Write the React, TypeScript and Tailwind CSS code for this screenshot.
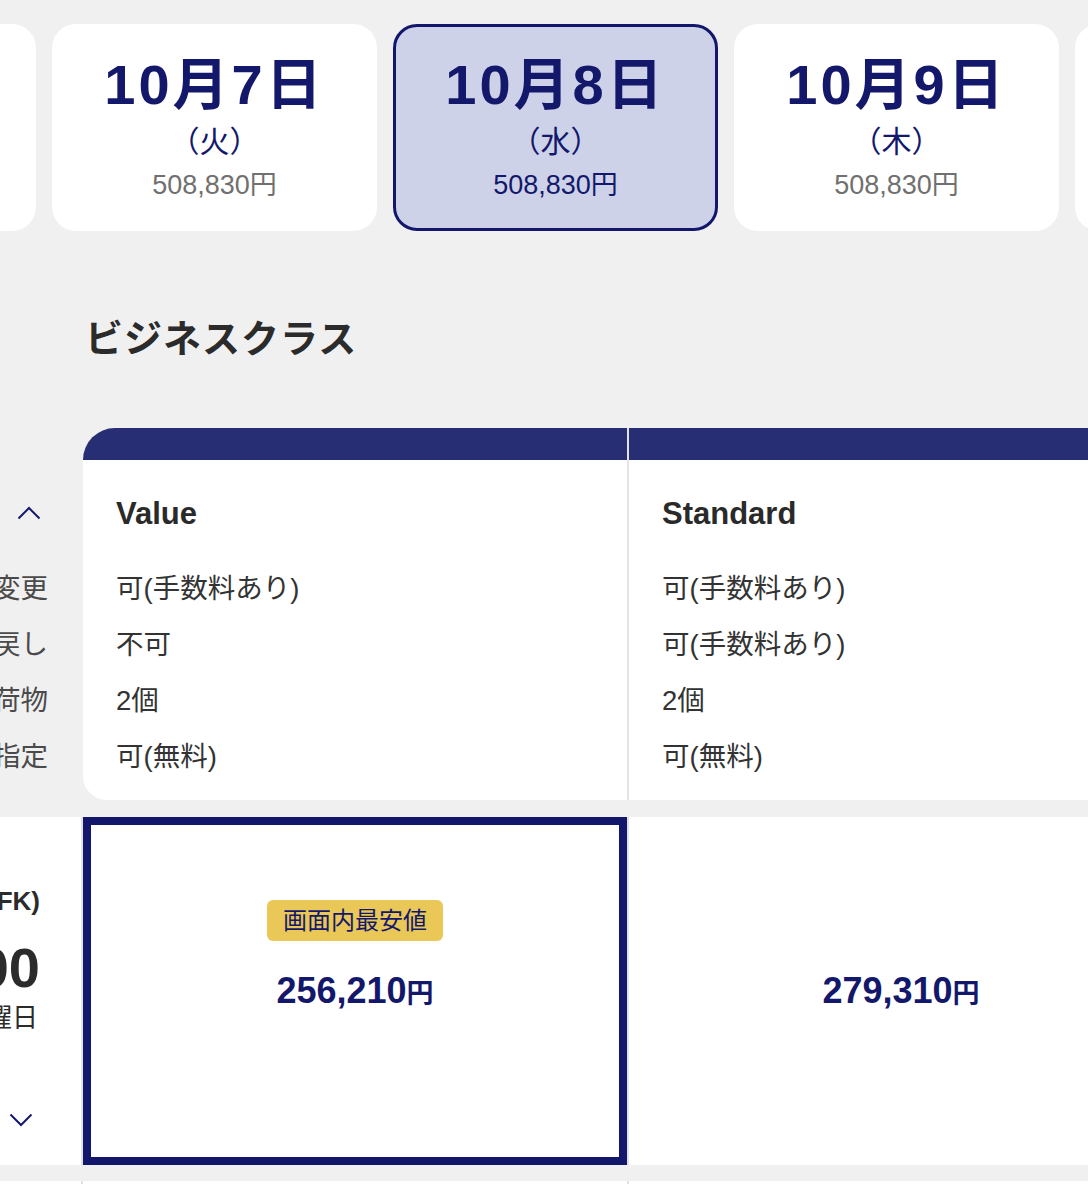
import React from 'react';

const FONT = { fontFamily: '"Liberation Sans", "Noto Sans CJK JP", sans-serif' };

interface DateItem {
    date: string;
    day: string;
    price: string;
    selected?: boolean;
}

const dates: DateItem[] = [
    { date: '10月6日', day: '（月）', price: '508,830円' },
    { date: '10月7日', day: '（火）', price: '508,830円' },
    { date: '10月8日', day: '（水）', price: '508,830円', selected: true },
    { date: '10月9日', day: '（木）', price: '508,830円' },
    { date: '10月10日', day: '（金）', price: '508,830円' },
];

const plans = [
    { name: 'Value', rows: ['可(手数料あり)', '不可', '2個', '可(無料)'] },
    { name: 'Standard', rows: ['可(手数料あり)', '可(手数料あり)', '2個', '可(無料)'] },
];

const labels = ['予約変更', '払い戻し', '受託手荷物', '座席指定'];

const Chevron = ({ up }: { up?: boolean }) => (
    <svg width="24" height="14" viewBox="0 0 24 14" fill="none">
        <path
            d={up ? 'M1.5 12.5 L12 2 L22.5 12.5' : 'M1.5 1.5 L12 12 L22.5 1.5'}
            stroke="#141a6b"
            strokeWidth="2"
        />
    </svg>
);

const DateCard = ({ item }: { item: DateItem }) => {
    return (
        <div
            className={
                item.selected
                    ? 'w-[325px] h-[207px] shrink-0 rounded-[24px] bg-[#cdd2e8] border-[3px] border-[#12176b] flex flex-col items-center pt-[30px]'
                    : 'w-[325px] h-[207px] shrink-0 rounded-[24px] bg-white border-[3px] border-transparent flex flex-col items-center pt-[30px]'
            }
        >
            <div className="text-[56px] leading-[56px] font-bold tracking-[3px] text-[#13186b]">
                {item.date}
            </div>
            <div className="mt-[11px] text-[30px] leading-[36px] text-[#13186b]">
                {item.day}
            </div>
            <div
                className={
                    item.selected
                        ? 'mt-[9px] text-[27px] leading-[32px] text-[#13186b]'
                        : 'mt-[9px] text-[27px] leading-[32px] text-[#707070]'
                }
            >
                {item.price}
            </div>
        </div>
    );
};

const PlanBody = ({ name, rows, rounded }: { name: string; rows: string[]; rounded?: boolean }) => (
    <div
        className={
            rounded
                ? 'w-[544px] shrink-0 bg-white rounded-bl-[24px] pl-[33px] pt-[34px] pb-[15px]'
                : 'w-[544px] shrink-0 bg-white pl-[33px] pt-[34px] pb-[15px]'
        }
    >
        <div className="text-[31px] leading-[40px] font-bold text-[#2a2a2a]">{name}</div>
        <div className="mt-[27px]">
            {rows.map((row, i) => (
                <div key={i} className="h-14 flex items-center text-[27.5px] text-[#333333]">
                    {row}
                </div>
            ))}
        </div>
    </div>
);

export default function App() {
    return (
        <div className="w-[1088px] h-[1184px] overflow-hidden bg-[#f0f0f0]" style={FONT}>
            <div className="flex gap-4 pt-6 ml-[-289px]">
                {dates.map((d) => (
                    <DateCard key={d.date} item={d} />
                ))}
            </div>

            <h2 className="ml-[85px] mt-[84px] text-[38px] leading-[48px] font-bold tracking-[1px] text-[#2b2b2b]">
                ビジネスクラス
            </h2>

            {/* plan table */}
            <div className="mt-[65px] flex">
                <div className="w-[83px] shrink-0 overflow-hidden pt-8">
                    <div className="h-[74px] flex items-center justify-end pr-[42px] pt-[32px]">
                        <Chevron up />
                    </div>
                    <div className="mt-[27px]">
                        {labels.map((l) => (
                            <div
                                key={l}
                                className="h-14 flex items-center justify-end pr-[35px] text-[27.5px] text-[#4a4a4a] whitespace-nowrap"
                            >
                                {l}
                            </div>
                        ))}
                    </div>
                </div>
                <div className="w-[1090px] shrink-0 flex flex-col">
                    <div className="flex h-8">
                        <div className="w-[544px] bg-[#282e73] rounded-tl-[32px]" />
                        <div className="w-[2px] bg-[#e4e4e4]" />
                        <div className="w-[544px] bg-[#282e73]" />
                    </div>
                    <div className="flex">
                        <PlanBody name={plans[0].name} rows={plans[0].rows} rounded />
                        <div className="w-[2px] bg-[#e4e4e4]" />
                        <PlanBody name={plans[1].name} rows={plans[1].rows} />
                    </div>
                </div>
            </div>

            {/* flight row */}
            <div className="mt-[17px] flex h-[348px]">
                <div className="w-[81px] shrink-0 bg-white overflow-hidden flex flex-col items-end pr-[41px] pt-[68px] whitespace-nowrap">
                    <div className="text-[26px] leading-[32px] font-bold text-[#2b2b2b]">(JFK)</div>
                    <div className="mt-[21px] text-[56px] leading-[60px] font-bold text-[#2b2b2b]">17:00</div>
                    <div className="mt-[4px] text-[26px] leading-[32px] text-[#2b2b2b] pr-[2px]">水曜日</div>
                    <div className="mt-[79px] self-start ml-[9px]">
                        <Chevron />
                    </div>
                </div>
                <div className="w-[2px] shrink-0 bg-[#e2e2e2]" />
                <div className="w-[544px] shrink-0 bg-white border-[8px] border-[#12176b] flex items-center justify-center">
                    <div className="relative">
                        <div className="absolute bottom-full left-1/2 -translate-x-1/2 mb-[23px] whitespace-nowrap bg-[#eac857] rounded-[6px] px-[16px] h-[41px] flex items-center text-[24px] text-[#13186b]">
                            画面内最安値
                        </div>
                        <div className="text-[#13186b] font-bold whitespace-nowrap">
                            <span className="text-[36px]">256,210</span>
                            <span className="text-[27px]">円</span>
                        </div>
                    </div>
                </div>
                <div className="w-[2px] shrink-0 bg-[#e2e2e2]" />
                <div className="w-[544px] shrink-0 bg-white flex items-center justify-center">
                    <div className="text-[#13186b] font-bold whitespace-nowrap">
                        <span className="text-[36px]">279,310</span>
                        <span className="text-[27px]">円</span>
                    </div>
                </div>
            </div>

            {/* next row (cut off) */}
            <div className="mt-4 flex h-[40px]">
                <div className="w-[81px] shrink-0 bg-white" />
                <div className="w-[2px] shrink-0 bg-[#e2e2e2]" />
                <div className="w-[544px] shrink-0 bg-white" />
                <div className="w-[2px] shrink-0 bg-[#e2e2e2]" />
                <div className="w-[544px] shrink-0 bg-white" />
            </div>
        </div>
    );
}
